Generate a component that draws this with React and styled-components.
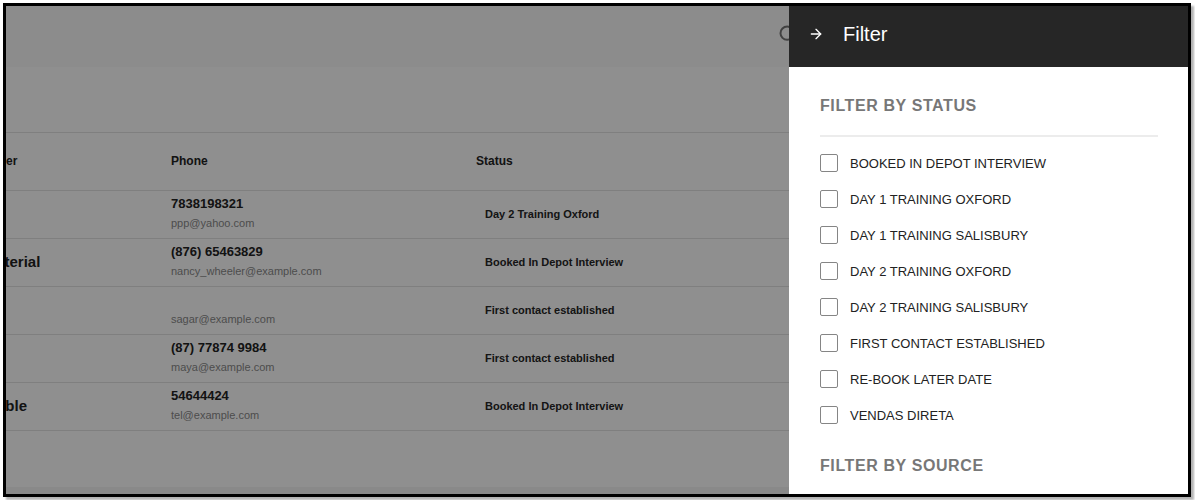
import React from 'react'
import styled, { createGlobalStyle } from 'styled-components'
import { ArrowRight, Search, Bell, Settings } from 'lucide-react'

const GlobalStyle = createGlobalStyle`
  html, body {
    margin: 0;
    padding: 0;
    background: #fff;
  }
  body {
    font-family: "Liberation Sans", Arial, sans-serif;
  }
  * {
    box-sizing: border-box;
  }
`

const Frame = styled.div`
  position: relative;
  margin: 3px;
  width: 1188px;
  height: 494px;
  border: 3px solid #000;
  box-shadow: 3px 3px 2px rgba(0, 0, 0, 0.3);
  overflow: hidden;
  background: #fff;
`

const Page = styled.div`
  display: flex;
  flex-direction: column;
  height: 100%;
`

const TopBar = styled.header`
  display: flex;
  align-items: center;
  height: 61px;
  padding: 0 24px 5px;
  background: #fafafa;
  flex-shrink: 0;
`

const SearchButton = styled.button`
  display: flex;
  margin-left: auto;
  padding: 0;
  border: 0;
  background: none;
  color: #757575;
`

const UserArea = styled.div`
  display: flex;
  align-items: center;
  justify-content: flex-end;
  gap: 18px;
  width: 366px;
  color: #757575;
`

const Avatar = styled.div`
  width: 32px;
  height: 32px;
  border-radius: 50%;
  background: #bdbdbd;
`

const Toolbar = styled.div`
  height: 65px;
  flex-shrink: 0;
  background: #fff;
`

const TableViewport = styled.div`
  flex: 1;
  overflow: hidden;
  border-top: 1px solid #e2e2e2;
`

const Table = styled.div`
  margin-left: -42px;
  width: 1400px;
`

const Row = styled.div`
  display: grid;
  grid-template-columns: 191px 305px 340px 1fr;
  align-items: center;
  height: ${p => (p.$head ? 58 : 48)}px;
  padding-bottom: 2px;
  border-bottom: 1px solid #e2e2e2;
`

const HeadCell = styled.div`
  padding: 0 16px;
  font-size: 12px;
  line-height: 16px;
  font-weight: 700;
  color: #222;
  white-space: nowrap;
`

const NameCell = styled.div`
  padding: 0 16px 0 13px;
  font-size: 15px;
  line-height: 18px;
  font-weight: 700;
  color: #222;
  white-space: nowrap;
`

const ContactCell = styled.div`
  display: flex;
  flex-direction: column;
  gap: 1px;
  padding: 0 16px;
`

const PhoneText = styled.div`
  height: 18px;
  line-height: 18px;
  font-size: 13px;
  font-weight: 700;
  color: #222;
`

const EmailText = styled.div`
  height: 18px;
  line-height: 18px;
  font-size: 11px;
  color: #8a8a8a;
`

const StatusCell = styled.div`
  padding: 0 16px;
`

const StatusChip = styled.span`
  display: block;
  padding: 0 9px;
  font-size: 11px;
  line-height: 16px;
  font-weight: 700;
  color: #262626;
  white-space: nowrap;
`

const Footer = styled.div`
  height: 7px;
  flex-shrink: 0;
  background: #f4f4f4;
`

const Backdrop = styled.div`
  position: absolute;
  inset: 0;
  background: rgba(0, 0, 0, 0.44);
`

const Drawer = styled.aside`
  position: absolute;
  top: 0;
  right: 0;
  bottom: 0;
  width: 399px;
  display: flex;
  flex-direction: column;
  background: #fff;
`

const DrawerHeader = styled.div`
  display: flex;
  align-items: center;
  gap: 19px;
  height: 61px;
  padding: 0 19px 5px;
  flex-shrink: 0;
  background: #262626;
  color: #fff;
`

const CloseButton = styled.button`
  display: flex;
  padding: 0;
  border: 0;
  background: none;
  color: #fff;
`

const DrawerTitle = styled.h2`
  margin: 0;
  font-size: 20px;
  font-weight: 400;
  line-height: 1;
`

const DrawerBody = styled.div`
  flex: 1;
  overflow: hidden;
  padding: 29px 30px 0 31px;
`

const Section = styled.section`
  margin-bottom: 23px;
`

const SectionTitle = styled.h3`
  margin: 0 0 19px;
  font-size: 16px;
  line-height: 20px;
  font-weight: 700;
  letter-spacing: 0.6px;
  color: #777;
`

const Divider = styled.div`
  height: 2px;
  background: #ececec;
`

const OptionList = styled.div`
  margin-top: 8px;
`

const Option = styled.label`
  display: flex;
  align-items: center;
  gap: 12px;
  height: 36px;
  font-size: 13px;
  color: #222;
`

const Box = styled.span`
  width: 18px;
  height: 18px;
  border: 1px solid #858585;
  border-radius: 2px;
  background: #fff;
`

const rows = [
  { name: '', phone: '7838198321', email: 'ppp@yahoo.com', status: 'Day 2 Training Oxford' },
  { name: 'Bacterial', phone: '(876) 65463829', email: 'nancy_wheeler@example.com', status: 'Booked In Depot Interview' },
  { name: '', phone: '', email: 'sagar@example.com', status: 'First contact established' },
  { name: '', phone: '(87) 77874 9984', email: 'maya@example.com', status: 'First contact established' },
  { name: 'Unable', phone: '54644424', email: 'tel@example.com', status: 'Booked In Depot Interview' },
]

const statuses = [
  'BOOKED IN DEPOT INTERVIEW',
  'DAY 1 TRAINING OXFORD',
  'DAY 1 TRAINING SALISBURY',
  'DAY 2 TRAINING OXFORD',
  'DAY 2 TRAINING SALISBURY',
  'FIRST CONTACT ESTABLISHED',
  'RE-BOOK LATER DATE',
  'VENDAS DIRETA',
]

export default function App() {
  return (
    <>
      <GlobalStyle />
      <Frame>
        <Page>
          <TopBar>
            <SearchButton>
              <Search size={20} strokeWidth={2.4} />
            </SearchButton>
            <UserArea>
              <Bell size={20} />
              <Settings size={20} />
              <Avatar />
            </UserArea>
          </TopBar>
          <Toolbar />
          <TableViewport>
            <Table>
              <Row $head>
                <HeadCell>Owner</HeadCell>
                <HeadCell>Phone</HeadCell>
                <HeadCell>Status</HeadCell>
                <HeadCell>Source</HeadCell>
              </Row>
              {rows.map((r, i) => (
                <Row key={i}>
                  <NameCell>{r.name}</NameCell>
                  <ContactCell>
                    <PhoneText>{r.phone}</PhoneText>
                    <EmailText>{r.email}</EmailText>
                  </ContactCell>
                  <StatusCell>
                    <StatusChip>{r.status}</StatusChip>
                  </StatusCell>
                  <NameCell />
                </Row>
              ))}
            </Table>
          </TableViewport>
          <Footer />
        </Page>
        <Backdrop />
        <Drawer>
          <DrawerHeader>
            <CloseButton>
              <ArrowRight size={16} />
            </CloseButton>
            <DrawerTitle>Filter</DrawerTitle>
          </DrawerHeader>
          <DrawerBody>
            <Section>
              <SectionTitle>FILTER BY STATUS</SectionTitle>
              <Divider />
              <OptionList>
                {statuses.map(s => (
                  <Option key={s}>
                    <Box />
                    {s}
                  </Option>
                ))}
              </OptionList>
            </Section>
            <Section>
              <SectionTitle>FILTER BY SOURCE</SectionTitle>
              <Divider />
            </Section>
          </DrawerBody>
        </Drawer>
      </Frame>
    </>
  )
}
